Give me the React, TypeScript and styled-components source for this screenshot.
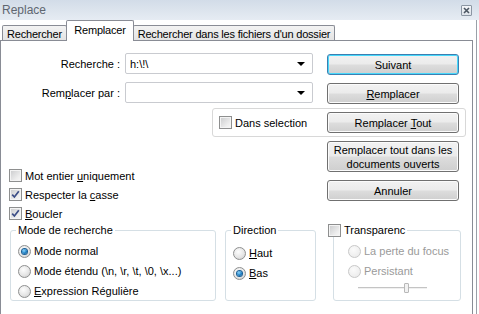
import * as React from 'react';
import styled, { createGlobalStyle, css } from 'styled-components';

const FONT = `'Liberation Sans', Arial, sans-serif`;
const TAB_BORDER = '#898c95';
const GROUP_BORDER = '#d5dfe5';
const DISABLED_TEXT = '#9a9a9a';

const GlobalStyle = createGlobalStyle`
  html, body { margin: 0; padding: 0; background: #fff; }
  body { font-family: ${FONT}; font-size: 11px; color: #000; }
`;

const Window = styled.div`
  width: 479px;
  height: 314px;
  overflow: hidden;
  display: flex;
  flex-direction: column;
  background: #fff;
`;

const TitleBar = styled.div`
  height: 20px;
  flex: none;
  display: flex;
  align-items: center;
  justify-content: space-between;
  padding: 0 7px 0 2px;
  background: linear-gradient(#d2dce8, #e6ecf3);
`;

const Title = styled.span`
  font-size: 12px;
  color: #5e6670;
`;

const CloseBox = styled.div`
  width: 9px;
  height: 9px;
  border: 1px solid #8b96a3;
  border-radius: 1px;
  background: linear-gradient(#f4f6f9, #dde3ea);
  display: flex;
  align-items: center;
  justify-content: center;
`;

const Body = styled.div`
  flex: 1;
  display: flex;
  flex-direction: column;
  padding-right: 3px;
  border-right: 1px solid #9aa0a8;
  margin-right: 2px;
`;

const TabStrip = styled.div`
  height: 21px;
  flex: none;
  display: flex;
  align-items: flex-end;
  padding-left: 2px;
  margin-bottom: -1px;
  position: relative;
  z-index: 1;
`;

const Tab = styled.div<{ $active?: boolean; $width: number }>`
  box-sizing: border-box;
  width: ${p => p.$width}px;
  border: 1px solid ${TAB_BORDER};
  border-bottom: none;
  border-radius: 2px 2px 0 0;
  display: flex;
  align-items: center;
  justify-content: center;
  white-space: nowrap;
  letter-spacing: -0.2px;
  ${p => p.$active ? css`
    height: 21px;
    background: #fff;
    margin: 0 -1px;
    position: relative;
    z-index: 1;
    padding-bottom: 2px;
  ` : css`
    height: 15px;
    margin-bottom: 1px;
    background: linear-gradient(#f3f3f3, #e4e4e4);
    padding-top: 1px;
  `}
`;

const Panel = styled.div`
  flex: 1;
  border: 1px solid ${TAB_BORDER};
  border-bottom: none;
  padding: 12px 0 0 8px;
  display: flex;
  flex-direction: column;
`;

const FieldRow = styled.div<{ $gap?: number }>`
  display: flex;
  align-items: flex-start;
  height: 22px;
  margin-top: ${p => p.$gap || 0}px;
`;

const FieldLabel = styled.div`
  width: 111px;
  height: 21px;
  display: flex;
  align-items: center;
  justify-content: flex-end;
`;

const Combo = styled.div`
  box-sizing: border-box;
  width: 188px;
  height: 21px;
  margin-left: 5px;
  border: 1px solid #c9cbd0;
  border-radius: 2px;
  display: flex;
  align-items: center;
  justify-content: space-between;
  padding: 0 7px 0 4px;
`;

const ComboArrow = styled.span`
  width: 0;
  height: 0;
  border-left: 4px solid transparent;
  border-right: 4px solid transparent;
  border-top: 4px solid #000;
`;

const PushButton = styled.div<{ $default?: boolean; $height?: number }>`
  box-sizing: border-box;
  width: 132px;
  height: ${p => p.$height || 21}px;
  flex: none;
  border: 1px solid ${p => p.$default ? '#3c7fb1' : '#707070'};
  border-radius: 3px;
  background: linear-gradient(#f2f2f2 0%, #ebebeb 49%, #dddddd 51%, #cfcfcf 100%);
  box-shadow: inset 0 0 0 1px ${p => p.$default ? '#48d8fb' : '#fbfbfb'};
  display: flex;
  align-items: center;
  justify-content: center;
  text-align: center;
  line-height: 14px;
`;

const RowButton = styled(PushButton)`
  margin-left: 14px;
  margin-top: 1px;
`;

const SelectionBox = styled.div`
  box-sizing: border-box;
  width: 254px;
  height: 29px;
  margin: 4px 0 0 203px;
  border: 1px solid #d8d8d8;
  border-radius: 3px;
  display: flex;
  align-items: center;
  justify-content: space-between;
  padding: 0 6px 0 6px;
`;

const MiddleArea = styled.div`
  display: grid;
  grid-template-columns: 318px 132px;
  margin-top: 4px;
`;

const OptionList = styled.div`
  display: flex;
  flex-direction: column;
  padding-top: 25px;
`;

const ButtonStack = styled.div`
  display: flex;
  flex-direction: column;
  gap: 8px;
`;

const OptionRow = styled.label<{ $disabled?: boolean; $height?: number }>`
  height: ${p => p.$height || 19}px;
  display: flex;
  align-items: center;
  gap: 3px;
  white-space: nowrap;
  color: ${p => p.$disabled ? DISABLED_TEXT : '#000'};
`;

const CheckBoxBox = styled.span`
  box-sizing: border-box;
  width: 13px;
  height: 13px;
  flex: none;
  border: 1px solid #8e8f8f;
  background: linear-gradient(135deg, #c9cacc 0%, #eeeeee 70%, #f8f8f8 100%);
  box-shadow: inset 0 0 0 1px #f4f4f4;
  display: flex;
  align-items: center;
  justify-content: center;
`;

const RadioCircle = styled.span<{ $disabled?: boolean }>`
  box-sizing: border-box;
  width: 13px;
  height: 13px;
  flex: none;
  border-radius: 50%;
  border: 1px solid ${p => p.$disabled ? '#c8c8c8' : '#8e8f8f'};
  background: ${p => p.$disabled
    ? 'radial-gradient(circle at 40% 35%, #fbfbfb, #e8e8e8)'
    : 'radial-gradient(circle at 40% 35%, #fdfdfd 0%, #e6e6e6 55%, #c9c9c9 100%)'};
  display: flex;
  align-items: center;
  justify-content: center;
`;

const RadioDot = styled.span`
  width: 5px;
  height: 5px;
  border-radius: 50%;
  background: radial-gradient(circle at 40% 35%, #8fd8ff 0%, #1d7fc4 55%, #0b4f8a 100%);
  box-shadow: 0 0 0 1px #1a5f95;
`;

const GroupsRow = styled.div`
  display: flex;
  align-items: flex-start;
  margin-top: 1px;
  padding-left: 1px;
`;

const Group = styled.fieldset<{ $width: number; $left?: number }>`
  box-sizing: border-box;
  width: ${p => p.$width}px;
  height: 77px;
  margin: 0 0 0 ${p => p.$left || 0}px;
  padding: 0;
  border: 1px solid ${GROUP_BORDER};
  border-radius: 3px;
`;

const GroupTitle = styled.legend<{ $shift?: number }>`
  padding: 0 2px;
  margin-left: ${p => p.$shift ?? 4}px;
  line-height: 13px;
  display: flex;
  align-items: center;
  gap: 3px;
`;

const GroupBody = styled.div<{ $top: number; $left: number }>`
  display: flex;
  flex-direction: column;
  padding: ${p => p.$top}px 0 0 ${p => p.$left}px;
`;

const Slider = styled.div`
  position: relative;
  width: 69px;
  height: 10px;
  margin: 2px 0 0 10px;
`;

const SliderTrack = styled.div`
  position: absolute;
  left: 0;
  right: 0;
  top: 4px;
  height: 1px;
  background: #c4c4c4;
  border-bottom: 1px solid #f0f0f0;
`;

const SliderThumb = styled.div`
  position: absolute;
  left: 46px;
  top: 0;
  width: 3px;
  height: 8px;
  border: 1px solid #b8b8b8;
  border-radius: 1px;
  background: #f2f2f2;
`;

const CheckMark = () => (
  <svg width="9" height="9" viewBox="0 0 9 9">
    <path d="M1.2 4.6 L3.4 7 L7.8 1.3" fill="none" stroke="#3b4d86" strokeWidth="1.7" />
  </svg>
);

const CloseIcon = () => (
  <svg width="7" height="7" viewBox="0 0 7 7">
    <path d="M1 1 L6 6 M6 1 L1 6" stroke="#4a5561" strokeWidth="1.6" />
  </svg>
);

const CheckBox: React.FC<{ checked?: boolean }> = ({ checked }) => (
  <CheckBoxBox>{checked ? <CheckMark /> : null}</CheckBoxBox>
);

const Radio: React.FC<{ checked?: boolean; disabled?: boolean; children: React.ReactNode }> = ({ checked, disabled, children }) => (
  <OptionRow $disabled={disabled} $height={20}>
    <RadioCircle $disabled={disabled}>{checked ? <RadioDot /> : null}</RadioCircle>
    <span>{children}</span>
  </OptionRow>
);

const Option: React.FC<{ checked?: boolean; children: React.ReactNode }> = ({ checked, children }) => (
  <OptionRow>
    <CheckBox checked={checked} />
    <span>{children}</span>
  </OptionRow>
);

const App: React.FC = () => {
  return (
    <Window>
      <GlobalStyle />
      <TitleBar>
        <Title>Replace</Title>
        <CloseBox><CloseIcon /></CloseBox>
      </TitleBar>
      <Body>
        <TabStrip>
          <Tab $width={65}>Rechercher</Tab>
          <Tab $width={68} $active>Remplacer</Tab>
          <Tab $width={202}>Rechercher dans les fichiers d'un dossier</Tab>
        </TabStrip>
        <Panel>
          <FieldRow>
            <FieldLabel>Recherche :</FieldLabel>
            <Combo><span>h:\!\</span><ComboArrow /></Combo>
            <RowButton $default>Suivant</RowButton>
          </FieldRow>
          <FieldRow $gap={7}>
            <FieldLabel><span>Rem<u>p</u>lacer par :</span></FieldLabel>
            <Combo><span /><ComboArrow /></Combo>
            <RowButton><span><u>R</u>emplacer</span></RowButton>
          </FieldRow>
          <SelectionBox>
            <Option>Dans selection</Option>
            <PushButton><span>Remplacer <u>T</u>out</span></PushButton>
          </SelectionBox>
          <MiddleArea>
            <OptionList>
              <Option>Mot entier <u>u</u>niquement</Option>
              <Option checked>Respecter la <u>c</u>asse</Option>
              <Option checked><u>B</u>oucler</Option>
            </OptionList>
            <ButtonStack>
              <PushButton $height={31}>Remplacer tout dans les<br />documents ouverts</PushButton>
              <PushButton>Annuler</PushButton>
            </ButtonStack>
          </MiddleArea>
          <GroupsRow>
            <Group $width={206}>
              <GroupTitle $shift={5}>Mode de recherche</GroupTitle>
              <GroupBody $top={4} $left={7}>
                <Radio checked>Mode normal</Radio>
                <Radio>Mode étendu (\n, \r, \t, \0, \x...)</Radio>
                <Radio><u>E</u>xpression Régulière</Radio>
              </GroupBody>
            </Group>
            <Group $width={91} $left={9}>
              <GroupTitle $shift={5}>Direction</GroupTitle>
              <GroupBody $top={6} $left={7}>
                <Radio><u>H</u>aut</Radio>
                <Radio checked><u>B</u>as</Radio>
              </GroupBody>
            </Group>
            <Group $width={128} $left={17}>
              <GroupTitle $shift={-8}>
                <CheckBox />
                <span>Transparenc</span>
              </GroupTitle>
              <GroupBody $top={4} $left={14}>
                <Radio disabled>La perte du focus</Radio>
                <Radio disabled>Persistant</Radio>
                <Slider>
                  <SliderTrack />
                  <SliderThumb />
                </Slider>
              </GroupBody>
            </Group>
          </GroupsRow>
        </Panel>
      </Body>
    </Window>
  );
};

export default App;
